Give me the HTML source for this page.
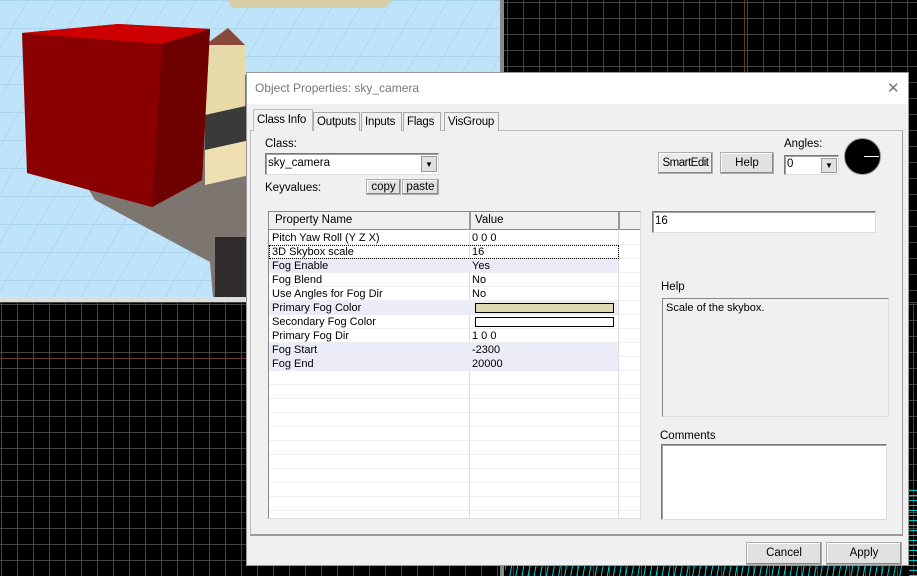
<!DOCTYPE html>
<html><head><style>
*{margin:0;padding:0;box-sizing:border-box}
body{width:917px;height:576px;overflow:hidden;position:relative;background:#000;font-family:"Liberation Sans",sans-serif;font-size:11px;color:#000}
.a{position:absolute}
.grid1{background-color:#000;background-image:repeating-linear-gradient(90deg,#444 0 1px,transparent 1px 16px),repeating-linear-gradient(180deg,#444 0 1px,transparent 1px 16px)}
.btn{position:absolute;background:#e1e1e1;border:1px solid #adadad;text-align:center;font-size:11.5px;box-shadow:inset -1px -1px 0 #888,inset 1px 1px 0 #fff}
.sunk{position:absolute;background:#fff;border:1px solid #7a7a7a;border-right-color:#ddd;border-bottom-color:#ddd;box-shadow:inset 1px 1px 0 #a0a0a0}
.tab{position:absolute;top:112px;height:19px;border:1px solid #aaa;border-bottom:none;background:#f0f0f0;font-size:11.5px;padding:3px 3px 0;letter-spacing:-0.2px}
.row{position:absolute;left:0;width:370px;height:14px;font-size:11px;line-height:14px}
.row span{position:absolute}
</style></head><body>
<div class="a grid1" style="left:503px;top:0;width:414px;height:300px;background-position:4px 2px"></div>
<div class="a" style="left:744px;top:0;width:1px;height:75px;background:#6a3a1a"></div>
<div class="a grid1" style="left:0;top:302px;width:917px;height:274px;background-position:1px 2px"></div>
<div class="a" style="left:0;top:358px;width:250px;height:1px;background:#6a3a1a"></div>
<div class="a" style="left:500px;top:0;width:4px;height:576px;background:#888"></div>
<div class="a" style="left:0;top:297px;width:500px;height:5px;background:#ddd"></div>
<svg class="a" style="left:0;top:0" width="500" height="297">
<defs><pattern id="t" width="28" height="28" patternUnits="userSpaceOnUse" patternTransform="skewX(-30)"><rect width="28" height="28" fill="#bfe3f8"/><path d="M0 0H28M0 0V28" stroke="#9cc8e6" stroke-width="1"/></pattern></defs>
<rect width="500" height="297" fill="url(#t)"/>
<path d="M228 0H392L385 8H232Z" fill="#d8cfa8"/>
<path d="M80 175L200 75L250 75L250 297L213 297L210 262L95 200Z" fill="#7d7570"/>
<path d="M205 170V45L228 28L245 45V170Z" fill="#e6dba8"/>
<path d="M228 28L245 45H205Z" fill="#8a4a3a"/>
<path d="M205 115L250 105V150L205 160Z" fill="#3a3a3a"/>
<path d="M205 150L250 140V175L205 185Z" fill="#eee0b0"/>
<path d="M215 237H246V297H215Z" fill="#2f2b2a"/>
<path d="M22 33L118 24L210 29L202 180L152 207L27 173Z" fill="#8a0000"/>
<path d="M22 33L118 24L210 29L162 44Z" fill="#cc0000"/>
<path d="M162 44L210 29L202 180L152 207Z" fill="#6e0000"/>
</svg>
<div class="a" style="left:505px;top:566px;width:400px;height:10px;background:repeating-linear-gradient(100deg,#0cc 0 1px,transparent 1px 6px)"></div>
<div class="a" style="left:909px;top:490px;width:8px;height:86px;background:repeating-linear-gradient(0deg,#0cc 0 1px,transparent 1px 5px)"></div>
<div class="a" style="left:246px;top:72px;width:663px;height:494px;background:#f0f0f0;border:1px solid #999">
<div class="a" style="left:0;top:0;width:661px;height:31px;background:#fff"></div>
<div class="a" style="left:8px;top:8px;font-size:12px;color:#777">Object Properties: sky_camera</div>
<div class="a" style="left:640px;top:6px;font-size:15px;color:#777;font-weight:300">&#x2715;</div>
</div>
<div class="a" style="left:250px;top:130px;width:653px;height:406px;border:1px solid #bbb;border-bottom:2px solid #999;border-right-color:#999"></div>
<div class="tab" style="left:253px;top:109px;height:22px;background:#f0f0f0;border-color:#bbb;padding-top:4px;width:60px">Class Info</div>
<div class="tab" style="left:313px;width:47px">Outputs</div>
<div class="tab" style="left:361px;width:41px">Inputs</div>
<div class="tab" style="left:403px;width:38px">Flags</div>
<div class="tab" style="left:444px;width:55px">VisGroup</div>
<div class="a" style="left:265px;top:138px;font-size:11.5px">Class:</div>
<div class="sunk" style="left:265px;top:153px;width:174px;height:22px;font-size:11.5px;padding:3px 2px">sky_camera
<div class="a" style="right:1px;top:2px;width:16px;height:16px;background:#e1e1e1;border:1px solid #999;font-size:8px;line-height:15px;text-align:center">&#9660;</div></div>
<div class="a" style="left:265px;top:182px;font-size:11.5px">Keyvalues:</div>
<div class="btn" style="left:366px;top:179px;width:35px;height:16px;line-height:14px">copy</div>
<div class="btn" style="left:402px;top:179px;width:37px;height:16px;line-height:14px">paste</div>
<div class="a" style="left:268px;top:211px;width:373px;height:308px;background:#fff;border:1px solid #888;border-right-color:#ddd;border-bottom-color:#ddd">
<div class="a" style="left:0;top:0;width:371px;height:18px;background:#f0f0f0;border-bottom:1px solid #888;font-size:11.5px">
<span class="a" style="left:6px;top:2px">Property Name</span><span class="a" style="left:206px;top:2px">Value</span>
<div class="a" style="left:200px;top:0;width:2px;height:18px;background:#999"></div>
<div class="a" style="left:349px;top:0;width:2px;height:18px;background:#999"></div></div>
<div class="a" style="left:0;top:19px;width:371px;height:287px;background:repeating-linear-gradient(180deg,transparent 0 13px,#eee 13px 14px)"></div>
<div class="a" style="left:200px;top:19px;width:1px;height:287px;background:#ddd"></div>
<div class="a" style="left:349px;top:19px;width:1px;height:287px;background:#ddd"></div>
<div class="row" style="top:19px"><span style="left:3px">Pitch Yaw Roll (Y Z X)</span><span style="left:203px">0 0 0</span></div>
<div class="row" style="top:33px;width:350px;border:1px dotted #000"><span style="left:2px;top:-1px">3D Skybox scale</span><span style="left:202px;top:-1px">16</span></div>
<div class="row" style="top:47px;background:#ececf8;width:349px"><span style="left:3px">Fog Enable</span><span style="left:203px">Yes</span></div>
<div class="row" style="top:61px"><span style="left:3px">Fog Blend</span><span style="left:203px">No</span></div>
<div class="row" style="top:75px"><span style="left:3px">Use Angles for Fog Dir</span><span style="left:203px">No</span></div>
<div class="row" style="top:89px;background:#ececf8;width:349px"><span style="left:3px">Primary Fog Color</span><span style="left:206px;top:2px;width:139px;height:10px;background:#e0d8b0;border:1px solid #000"></span></div>
<div class="row" style="top:103px"><span style="left:3px">Secondary Fog Color</span><span style="left:206px;top:2px;width:139px;height:10px;background:#fff;border:1px solid #000"></span></div>
<div class="row" style="top:117px"><span style="left:3px">Primary Fog Dir</span><span style="left:203px">1 0 0</span></div>
<div class="row" style="top:131px;background:#ececf8;width:349px"><span style="left:3px">Fog Start</span><span style="left:203px">-2300</span></div>
<div class="row" style="top:145px;background:#ececf8;width:349px"><span style="left:3px">Fog End</span><span style="left:203px">20000</span></div>
</div>
<div class="btn" style="left:658px;top:152px;width:55px;height:22px;line-height:20px;background:#eaeaea;letter-spacing:-0.5px">SmartEdit</div>
<div class="btn" style="left:720px;top:152px;width:54px;height:22px;line-height:20px">Help</div>
<div class="a" style="left:784px;top:138px;font-size:11.5px">Angles:</div>
<div class="sunk" style="left:784px;top:155px;width:55px;height:20px;font-size:11.5px;padding:2px 2px">0
<div class="a" style="right:1px;top:2px;width:16px;height:15px;background:#e1e1e1;border:1px solid #999;font-size:8px;line-height:14px;text-align:center">&#9660;</div></div>
<div class="a" style="left:844px;top:138px;width:37px;height:37px;border-radius:50%;background:#000;border:1px solid #999"></div>
<div class="a" style="left:864px;top:156px;width:15px;height:1px;background:#fff"></div>
<div class="sunk" style="left:652px;top:211px;width:224px;height:22px;font-size:11.5px;padding:3px 2px">16</div>
<div class="a" style="left:661px;top:281px;font-size:11.5px">Help</div>
<div class="a" style="left:662px;top:298px;width:227px;height:119px;border:1px solid #888;border-right-color:#ddd;border-bottom-color:#ddd;background:#f0f0f0;font-size:11px;padding:3px 3px">Scale of the skybox.</div>
<div class="a" style="left:660px;top:430px;font-size:11.5px">Comments</div>
<div class="sunk" style="left:661px;top:444px;width:226px;height:76px"></div>
<div class="btn" style="left:746px;top:542px;width:76px;height:23px;line-height:21px">Cancel</div>
<div class="btn" style="left:826px;top:542px;width:76px;height:23px;line-height:21px">Apply</div>
</body></html>
